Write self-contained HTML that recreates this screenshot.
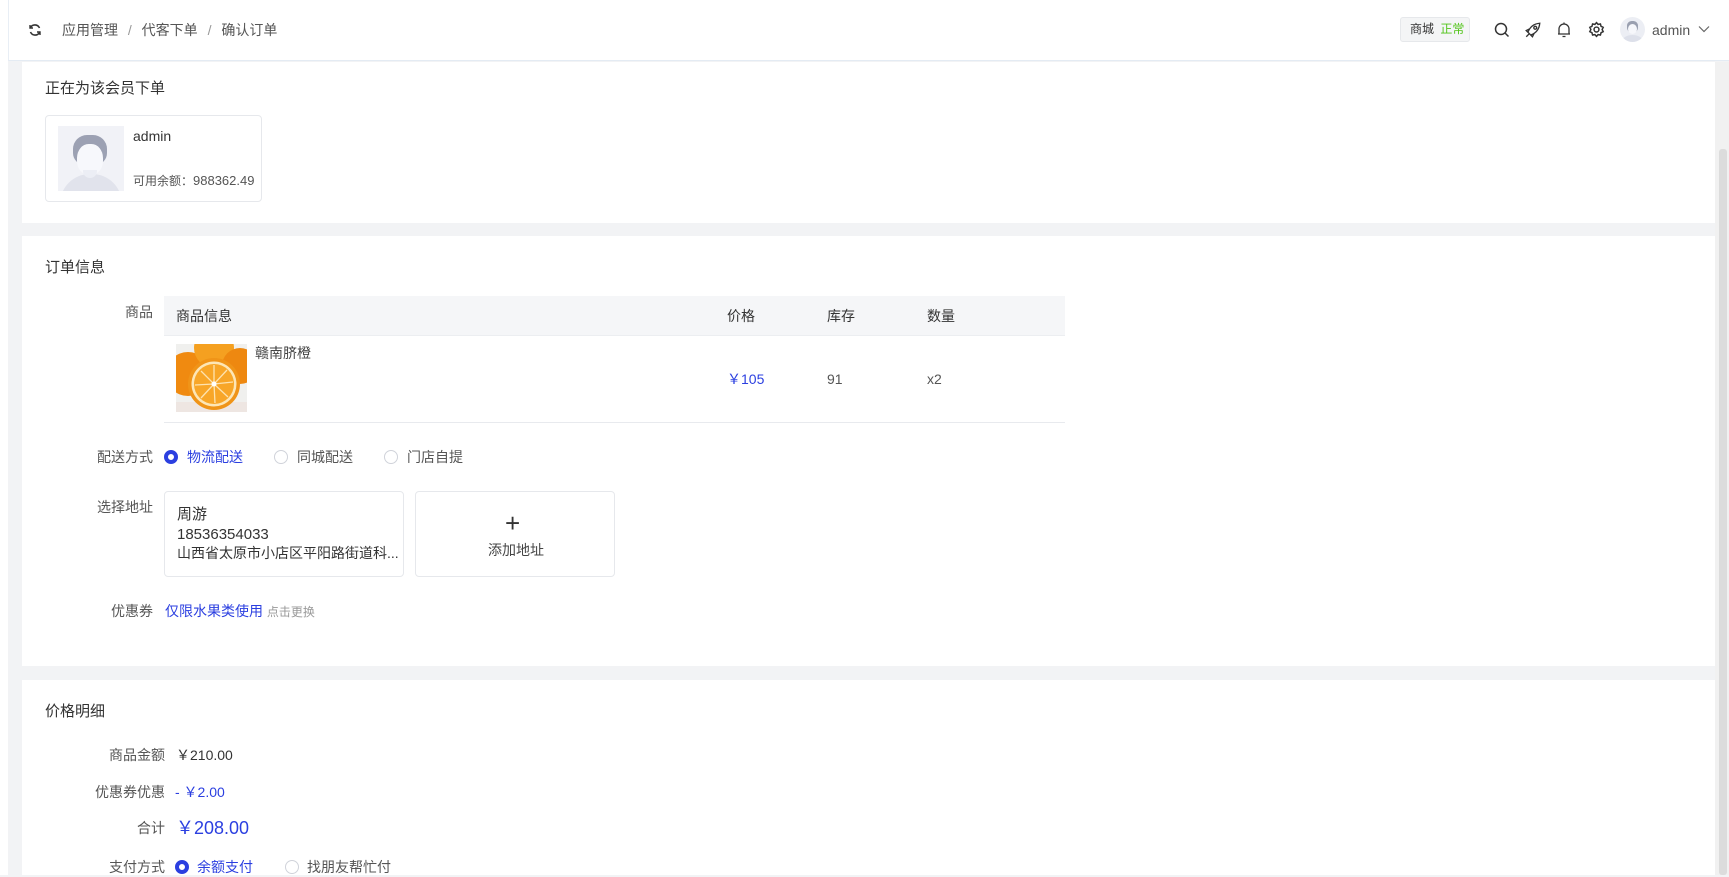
<!DOCTYPE html>
<html><head><meta charset="utf-8"><style>
*{margin:0;padding:0;box-sizing:border-box}
body{width:1729px;height:875px;overflow:hidden;background:#f2f3f5;font-family:"Liberation Sans","Noto Sans CJK SC",sans-serif;color:#333;font-size:14px;position:relative}
.a{position:absolute;line-height:20px;white-space:nowrap}
.card{position:absolute;left:22px;width:1693px;background:#fff}
.lbl{position:absolute;line-height:20px;text-align:right;width:140px;color:#555;white-space:nowrap}
.blue{color:#2b3fe0}
.rad{position:absolute;width:14px;height:14px;border-radius:50%;border:1px solid #d0d3da;background:#fff}
.rad.on{border:4px solid #2b3fe0}
</style></head><body>
<div style="position:absolute;left:0;top:0;width:8px;height:875px;background:#fff"></div>
<div style="position:absolute;left:8px;top:0;width:1721px;height:61px;background:#fff;border-bottom:1px solid #e4ebf3;border-left:1px solid #e8eef5"></div>
<svg class="a" style="left:28px;top:23px" width="14" height="14" viewBox="0 0 14 14" fill="none" stroke="#333" stroke-width="1.6"><path d="M11.5 5A5 5 0 0 0 2.5 4.5M2.5 9A5 5 0 0 0 11.5 9.5"/><path d="M2 2v3h3M12 12V9H9" stroke-width="1.4"/></svg>
<div class="a" style="left:62px;top:20px;color:#555;font-size:14px">应用管理 <span style="color:#999;margin:0 6px">/</span> 代客下单 <span style="color:#999;margin:0 6px">/</span> 确认订单</div>
<div class="a" style="left:1400px;top:17px;width:70px;height:25px;background:#f4f5f6;border:1px solid #e6e8eb;border-radius:3px;font-size:12px;line-height:23px;padding-left:9px">商城 <span style="color:#52c41a;margin-left:3px">正常</span></div>
<svg class="a" style="left:1494px;top:22px" width="16" height="16" viewBox="0 0 16 16" fill="none" stroke="#333" stroke-width="1.5"><circle cx="7" cy="7" r="5.5"/><path d="M11 11l3.5 3.5"/></svg>
<svg class="a" style="left:1524px;top:21px" width="18" height="18" viewBox="0 0 16 16" fill="none" stroke="#333" stroke-width="1.2"><path d="M6 12.5L3.5 10C5 6 8 2.5 14 2c-.5 6-4 9-8 10.5zM3.5 10L2 8.5l3-1.5M6 12.5L7.5 14l1.5-3M2 14l2.5-2.5"/><circle cx="10" cy="6" r="1.3"/></svg>
<svg class="a" style="left:1556px;top:21px" width="16" height="18" viewBox="0 0 16 18" fill="none" stroke="#333" stroke-width="1.3"><path d="M3 13V8a5 5 0 0 1 10 0v5H3zM2 13h12M6.5 15.5h3M8 1.5v1.5"/></svg>
<svg class="a" style="left:1588px;top:21px" width="17" height="17" viewBox="0 0 16 16" fill="none" stroke="#333" stroke-width="1.4"><circle cx="8" cy="8" r="2.3"/><path d="M8 1.5l1.5 1.7 2.2-.4.6 2.2 2 1-1 2 1 2-2 1-.6 2.2-2.2-.4L8 14.5l-1.5-1.7-2.2.4-.6-2.2-2-1 1-2-1-2 2-1 .6-2.2 2.2.4z"/></svg>
<div class="a" style="left:1620px;top:17px;width:25px;height:25px;border-radius:50%;background:#eceef4;overflow:hidden"><div style="position:absolute;left:7px;top:4px;width:11px;height:12px;border-radius:5px 5px 6px 6px;background:#9aa0b0"></div><div style="position:absolute;left:8px;top:7px;width:9px;height:10px;border-radius:50%;background:#f6f7fb"></div><div style="position:absolute;left:3px;top:18px;width:19px;height:10px;border-radius:50%;background:#dde0ea"></div></div>
<div class="a" style="left:1652px;top:20px;color:#555;font-size:14px">admin</div>
<svg class="a" style="left:1698px;top:25px" width="12" height="8" viewBox="0 0 12 8" fill="none" stroke="#666" stroke-width="1.2"><path d="M1 1.5l5 5 5-5"/></svg>
<div style="position:absolute;left:1715px;top:62px;width:14px;height:813px;background:#f1f1f1"></div>
<div style="position:absolute;left:1719px;top:149px;width:8px;height:726px;background:#c8c8c8;border-radius:3px;opacity:.5"></div>

<div class="card" style="top:62px;height:161px"></div>
<div class="card" style="top:236px;height:430px"></div>
<div class="card" style="top:680px;height:195px"></div>

<div class="a" style="left:45px;top:79px;font-size:15px;color:#333">正在为该会员下单</div>
<div class="a" style="left:45px;top:115px;width:217px;height:87px;border:1px solid #e6e8ec;border-radius:4px"></div>
<div class="a" style="left:58px;top:126px;width:66px;height:65px;background:#f1f2f7;overflow:hidden">
<div style="position:absolute;left:15px;top:9px;width:34px;height:30px;border-radius:14px 14px 12px 12px;background:#9ca1b3"></div>
<div style="position:absolute;left:19px;top:18px;width:26px;height:31px;border-radius:45%;background:#f7f8fc"></div>
<div style="position:absolute;left:2px;top:48px;width:62px;height:40px;border-radius:30px 30px 0 0;background:#e1e3ec"></div>
<div style="position:absolute;left:25px;top:44px;width:14px;height:8px;background:#eceef5;border-radius:0 0 7px 7px"></div>
</div>
<div class="a" style="left:133px;top:126px;font-size:14px">admin</div>
<div class="a" style="left:133px;top:171px;font-size:12px;color:#555">可用余额：<span style="font-size:13px">988362.49</span></div>

<div class="a" style="left:45px;top:258px;font-size:15px">订单信息</div>
<div class="lbl" style="left:13px;top:302px">商品</div>
<div class="a" style="left:164px;top:296px;width:901px;height:40px;background:#f5f6f8;border-bottom:1px solid #eceef1"></div>
<div class="a" style="left:176px;top:306px">商品信息</div>
<div class="a" style="left:727px;top:306px">价格</div>
<div class="a" style="left:827px;top:306px">库存</div>
<div class="a" style="left:927px;top:306px">数量</div>
<svg class="a" style="left:176px;top:344px" width="71" height="68" viewBox="0 0 71 68">
<rect width="71" height="68" fill="#f0f0ee"/>
<circle cx="12" cy="30" r="22" fill="#f08a10"/><circle cx="38" cy="4" r="20" fill="#f5a020"/><circle cx="64" cy="22" r="18" fill="#ee8810"/>
<rect x="0" y="58" width="71" height="10" fill="#eee6e2"/>
<circle cx="38" cy="40" r="26" fill="#f09418"/><circle cx="38" cy="40" r="22.5" fill="#fde6b6"/><circle cx="38" cy="40" r="20" fill="#f8a628"/>
<g stroke="#fde3b0" stroke-width="1.3"><path d="M38 40V21M38 40l13 -14M38 40l19 -2M38 40l14 13M38 40l1 19M38 40l-13 14M38 40l-19 1M38 40l-13 -13"/></g><circle cx="38" cy="40" r="2.5" fill="#fff"/>
</svg>
<div class="a" style="left:255px;top:343px;color:#444">赣南脐橙</div>
<div class="a blue" style="left:727px;top:369px">￥105</div>
<div class="a" style="left:827px;top:369px;color:#555">91</div>
<div class="a" style="left:927px;top:369px;color:#555">x2</div>
<div class="a" style="left:164px;top:422px;width:901px;height:1px;background:#e8eaee"></div>

<div class="lbl" style="left:13px;top:447px">配送方式</div>
<div class="rad on" style="left:164px;top:450px"></div><div class="a blue" style="left:187px;top:447px">物流配送</div>
<div class="rad" style="left:274px;top:450px"></div><div class="a" style="left:297px;top:447px;color:#555">同城配送</div>
<div class="rad" style="left:384px;top:450px"></div><div class="a" style="left:407px;top:447px;color:#555">门店自提</div>

<div class="lbl" style="left:13px;top:497px">选择地址</div>
<div class="a" style="left:164px;top:491px;width:240px;height:86px;border:1px solid #e6e8ec;border-radius:4px"></div>
<div class="a" style="left:177px;top:505px;font-size:15px">周游</div>
<div class="a" style="left:177px;top:525px;font-size:15px">18536354033</div>
<div class="a" style="left:177px;top:543px;font-size:14px">山西省太原市小店区平阳路街道科...</div>
<div class="a" style="left:415px;top:491px;width:200px;height:86px;border:1px solid #e6e8ec;border-radius:4px"></div>
<div class="a" style="left:505px;top:512px;font-size:26px;line-height:22px;font-weight:300">+</div>
<div class="a" style="left:488px;top:540px;font-size:14px;color:#444">添加地址</div>

<div class="lbl" style="left:13px;top:601px">优惠券</div>
<div class="a blue" style="left:165px;top:601px">仅限水果类使用 <span style="color:#999;font-size:12px">点击更换</span></div>

<div class="a" style="left:45px;top:702px;font-size:15px">价格明细</div>
<div class="lbl" style="left:25px;top:745px">商品金额</div>
<div class="a" style="left:176px;top:745px;color:#333">￥210.00</div>
<div class="lbl" style="left:25px;top:782px">优惠券优惠</div>
<div class="a blue" style="left:175px;top:782px">- ￥2.00</div>
<div class="lbl" style="left:25px;top:818px">合计</div>
<div class="a blue" style="left:176px;top:818px;font-size:18px">￥208.00</div>
<div class="lbl" style="left:25px;top:857px">支付方式</div>
<div class="rad on" style="left:175px;top:860px"></div><div class="a blue" style="left:197px;top:857px">余额支付</div>
<div class="rad" style="left:285px;top:860px"></div><div class="a" style="left:307px;top:857px;color:#555">找朋友帮忙付</div>
</body></html>
